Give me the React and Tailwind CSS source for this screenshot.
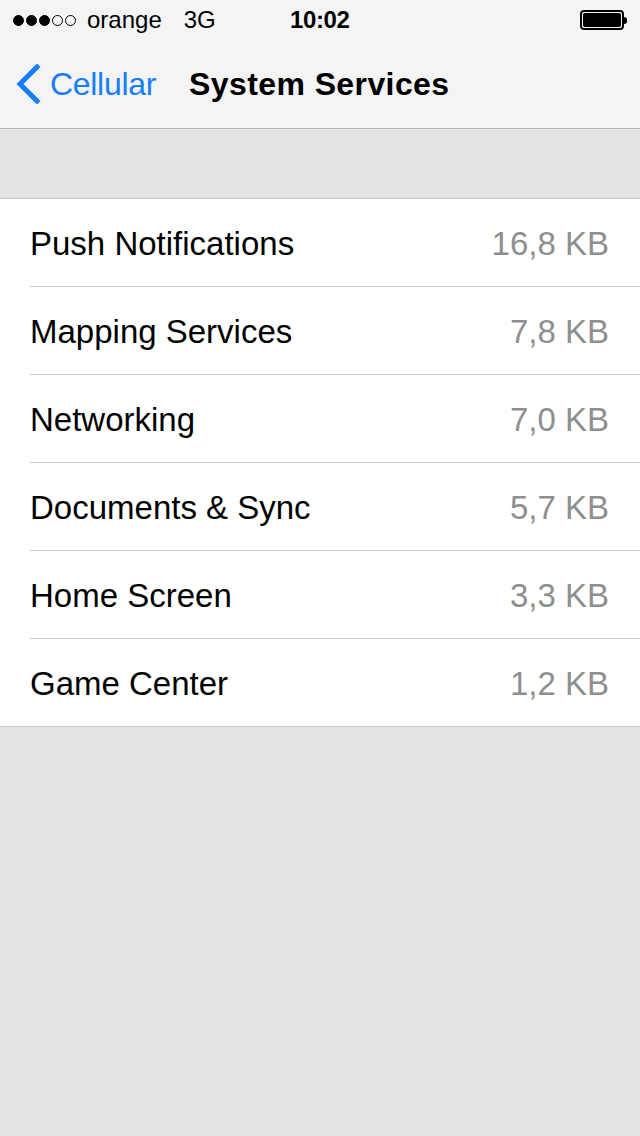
import React from 'react';

const rows = [
  { name: 'Push Notifications', size: '16,8 KB' },
  { name: 'Mapping Services', size: '7,8 KB' },
  { name: 'Networking', size: '7,0 KB' },
  { name: 'Documents & Sync', size: '5,7 KB' },
  { name: 'Home Screen', size: '3,3 KB' },
  { name: 'Game Center', size: '1,2 KB' },
];

const StatusBar = () => (
  <div className="h-10 flex items-center pl-[13px] pr-3 text-[24px] text-black">
    <div className="flex items-center gap-[2px] w-[210px]">
      {[0, 1, 2, 3, 4].map((i) => (
        <span
          key={i}
          className={`w-[11px] h-[11px] rounded-full border border-black ${i < 3 ? 'bg-black' : 'bg-transparent'}`}
        />
      ))}
      <span className="ml-[9px]">orange</span>
      <span className="ml-[20px]">3G</span>
    </div>
    <div className="ml-[67px] font-semibold tracking-[-0.4px]">10:02</div>
    <div className="ml-auto flex items-center mr-[1px]">
      <div className="w-[44px] h-[20px] rounded-[4px] border-2 border-black p-[1px]">
        <div className="w-full h-full bg-black rounded-[2px]" />
      </div>
      <div className="w-[3px] h-[7px] bg-black rounded-r-sm" />
    </div>
  </div>
);

const NavBar = () => (
  <div className="h-[89px] flex items-center border-b border-[#b2b2b2]">
    <div className="flex items-center pl-[15px] text-[#157efb]">
      <svg width="26" height="40" viewBox="0 0 26 40" className="mr-[9px]">
        <path d="M22 3 L5 20 L22 37" fill="none" stroke="currentColor" strokeWidth="5" strokeLinecap="square" />
      </svg>
      <span className="text-[32px] tracking-[-0.3px]">Cellular</span>
    </div>
    <div className="ml-[33px] text-[32px] font-bold text-black tracking-[0.4px]">System Services</div>
  </div>
);

export default function App() {
  return (
    <div className="w-[640px] h-[1136px] bg-[#e4e4e4] flex flex-col" style={{ fontFamily: '"Liberation Sans", Arial, sans-serif' }}>
      <div className="bg-[#f4f4f4]">
        <StatusBar />
        <NavBar />
      </div>
      <div className="h-[69px]" />
      <div className="bg-white border-y border-[#c8c7cc]">
        {rows.map((r, i) => {
          const last = i === rows.length - 1;
          return (
            <div key={r.name} className="pl-[30px]">
              <div className={`pt-[3px] flex items-center justify-between pr-[31px] ${last ? 'h-[87px]' : 'h-[88px] border-b border-[#c8c7cc]'}`}>
                <span className="text-[33px] text-black">{r.name}</span>
                <span className="text-[33px] text-[#8e8e8e]">{r.size}</span>
              </div>
            </div>
          );
        })}
      </div>
    </div>
  );
}
